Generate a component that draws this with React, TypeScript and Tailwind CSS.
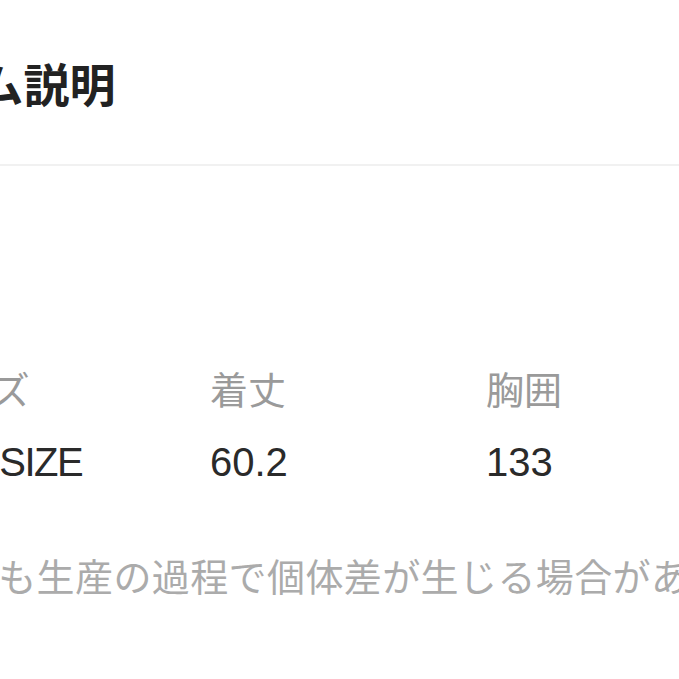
import React from "react";

const JP = "font-['Noto_Sans_CJK_JP','Noto_Sans',sans-serif]";
const LATIN = "font-['Liberation_Sans','Noto_Sans_CJK_JP',sans-serif]";

const ROWS = [
  { label: "サイズ", value: "FREE SIZE", labelShift: "-ml-[83px]", valueShift: "-ml-[111px] tracking-[-1.5px]" },
  { label: "着丈", value: "60.2" },
  { label: "胸囲", value: "133" },
];

export default function App() {
  return (
    <div className="w-[679px] h-[679px] overflow-hidden bg-white">
      <div className="h-[166px] border-b-2 border-[#f1f1f1] pt-[59px]">
        <h2
          className={`${JP} -ml-[156px] whitespace-nowrap text-[46px] leading-none font-bold text-[#222]`}
        >
          アイテム説明
        </h2>
      </div>

      <div className="grid grid-cols-[210px_276px_1fr] pt-[203px]">
        {ROWS.map((r) => (
          <div
            key={r.label}
            className={`${JP} whitespace-nowrap text-[38px] leading-[38px] text-[#9a9a9a] ${r.labelShift ?? ""}`}
          >
            {r.label}
          </div>
        ))}
        {ROWS.map((r) => (
          <div
            key={r.value}
            className={`${LATIN} mt-[35px] whitespace-nowrap text-[40px] leading-[40px] text-[#2a2a2a] ${r.valueShift ?? ""}`}
          >
            {r.value}
          </div>
        ))}
      </div>

      <p
        className={`${JP} mt-[74px] -ml-[117px] whitespace-nowrap text-[38px] leading-[37px] tracking-[0.4px] text-[#ababab]`}
      >
        ※どれも生産の過程で個体差が生じる場合があります。
      </p>
    </div>
  );
}
